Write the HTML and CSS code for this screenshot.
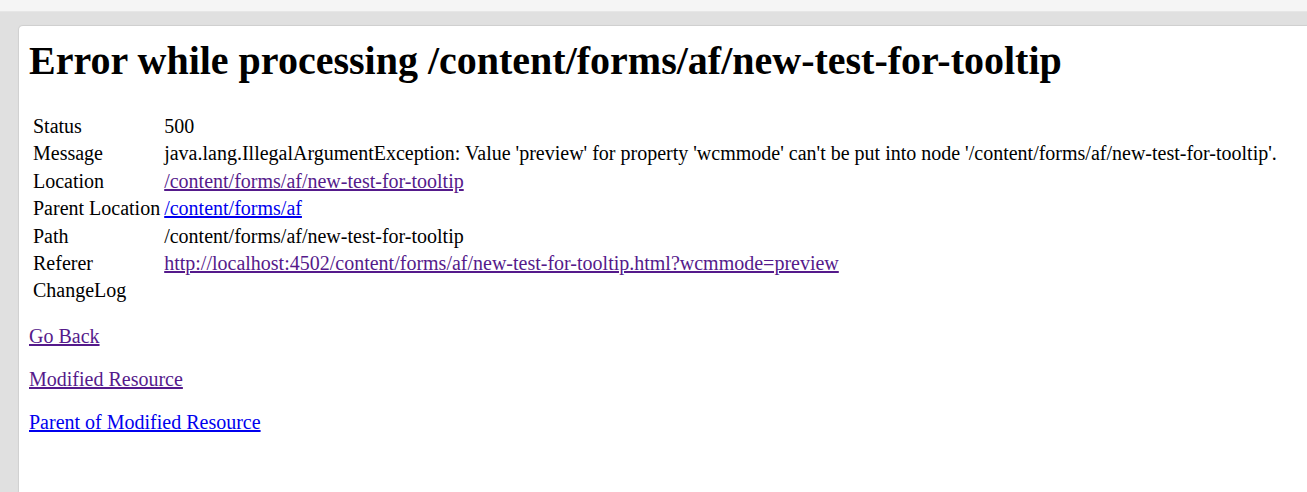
FILE: index.html
```html
<!DOCTYPE html>
<html>
<head>
<meta charset="utf-8">
<link rel="stylesheet" href="styles.css">
</head>
<body>
<div class="topstrip"></div>
<div class="frame">
  <div class="card">
    <h1 class="title">Error while processing /content/forms/af/new-test-for-tooltip</h1>
    <table class="info">
      <tbody>
        <tr><td>Status</td><td>500</td></tr>
        <tr><td>Message</td><td>java.lang.IllegalArgumentException: Value 'preview' for property 'wcmmode' can't be put into node '/content/forms/af/new-test-for-tooltip'.</td></tr>
        <tr><td>Location</td><td><a class="visited" href="#">/content/forms/af/new-test-for-tooltip</a></td></tr>
        <tr><td>Parent Location</td><td><a class="link" href="#">/content/forms/af</a></td></tr>
        <tr><td>Path</td><td>/content/forms/af/new-test-for-tooltip</td></tr>
        <tr><td>Referer</td><td><a class="visited" href="#">http://localhost:4502/content/forms/af/new-test-for-tooltip.html?wcmmode=preview</a></td></tr>
        <tr><td>ChangeLog</td><td></td></tr>
      </tbody>
    </table>
    <p class="para"><a class="visited" href="#">Go Back</a></p>
    <p class="para"><a class="visited" href="#">Modified Resource</a></p>
    <p class="para"><a class="link" href="#">Parent of Modified Resource</a></p>
  </div>
</div>
</body>
</html>
```
FILE: styles.css
```css
html, body {
  margin: 0;
  padding: 0;
  height: 100%;
}
body {
  background: #e0e0e0;
  font-family: "Liberation Serif", "Times New Roman", serif;
  color: #000;
  display: flex;
  flex-direction: column;
  overflow: hidden;
}
.topstrip {
  height: 11px;
  background: #f5f5f5;
  border-bottom: 1px solid #e6e6e6;
  flex: none;
}
.frame {
  flex: 1;
  display: flex;
  padding: 14px 0 0 19px;
}
.card {
  flex: 1;
  background: #fff;
  border-top-left-radius: 4px;
  box-shadow: 0 -1px 1px #cfcfcf, -1px 0 1px #d0d0d0;
  padding: 10px 10px 0 10px;
}
.title {
  font-size: 40px;
  font-weight: bold;
  margin: 2px 0 28px 0;
  line-height: 46px;
}
.info {
  border-spacing: 2px;
  font-size: 20px;
  margin: 0 0 -1px 1px;
}
.info td {
  padding: 1px;
  line-height: 23.4px;
  vertical-align: top;
  white-space: nowrap;
}
.para {
  font-size: 20px;
  line-height: 23px;
  margin: 20px 0;
}
.visited { color: #551a8b; }
.link { color: #0000ee; }
```
